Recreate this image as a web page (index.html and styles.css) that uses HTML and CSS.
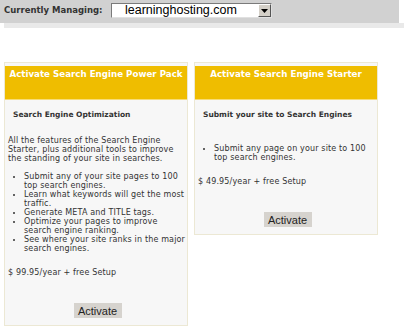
FILE: index.html
```html
<!DOCTYPE html>
<html lang="en">
<head>
  <meta charset="UTF-8" />
  <title>Search Engine Services</title>
  <link rel="stylesheet" href="styles.css">
</head>
<body>

  <div class="manage-bar">
    <span class="manage-label">Currently Managing:</span>
    <div class="domain-select">
      <span class="domain-name">learninghosting.com</span>
      <span class="drop-btn">
        <svg width="7" height="4" viewBox="0 0 7 4"><path d="M0 0h7L3.5 4z" fill="#000"/></svg>
      </span>
    </div>
  </div>
  <div class="manage-shadow"></div>

  <div class="plans">
    <div class="plan">
      <div class="plan-head">Activate Search Engine Power Pack</div>
      <div class="plan-body">
        <div class="plan-title">Search Engine Optimization</div>
        <p class="plan-desc">All the features of the Search Engine Starter, plus additional tools to improve the standing of your site in searches.</p>
        <ul class="plan-list">
          <li>Submit any of your site pages to 100 top search engines.</li>
          <li>Learn what keywords will get the most traffic.</li>
          <li>Generate META and TITLE tags.</li>
          <li>Optimize your pages to improve search engine ranking.</li>
          <li>See where your site ranks in the major search engines.</li>
        </ul>
        <p class="plan-price">$ 99.95/year + free Setup</p>
        <div class="plan-action"><button class="activate-btn">Activate</button></div>
      </div>
    </div>

    <div class="plan">
      <div class="plan-head">Activate Search Engine Starter</div>
      <div class="plan-body">
        <div class="plan-title">Submit your site to Search Engines</div>
        <ul class="plan-list starter">
          <li>Submit any page on your site to 100 top search engines.</li>
        </ul>
        <p class="plan-price">$ 49.95/year + free Setup</p>
        <div class="plan-action"><button class="activate-btn">Activate</button></div>
      </div>
    </div>
  </div>

</body>
</html>
```

FILE: styles.css
```css
* { box-sizing: border-box; }

body {
  margin: 0;
  background: #fff;
  font-family: 'DejaVu Sans', Verdana, sans-serif;
  color: #222;
}

.manage-bar {
  width: 399px;
  height: 23px;
  background: #d1d1d1;
  display: flex;
  align-items: flex-start;
  padding: 3px 0 0 4px;
}

.manage-label {
  font-size: 8.5px;
  font-weight: bold;
  color: #333;
  width: 107px;
  line-height: 15px;
}

.domain-select {
  width: 161px;
  height: 15px;
  background: #fff;
  border: 1px solid #7a7a7a;
  border-right-color: #e0e0e0;
  border-bottom-color: #e0e0e0;
  display: flex;
  align-items: center;
  justify-content: space-between;
}

.domain-name {
  font-family: 'Liberation Sans', Arial, sans-serif;
  font-size: 12.5px;
  color: #000;
  padding-left: 13px;
  line-height: 13px;
}

.drop-btn {
  width: 13px;
  height: 13px;
  background: #d4d0c8;
  border: 1px solid;
  border-color: #fff #555 #555 #fff;
  display: flex;
  align-items: center;
  justify-content: center;
}

.manage-shadow {
  margin-left: 4px;
  width: 400px;
  height: 5px;
  background: #e9e9e9;
}

.plans {
  display: flex;
  align-items: flex-start;
  gap: 6px;
  margin: 34px 0 0 4px;
}

.plan {
  width: 184px;
  background: #f7f7f7;
  border: 1px solid #ece8d4;
  padding-top: 3px;
}

.plan-head {
  height: 34px;
  background: #efbd00;
  border-bottom: 1px solid #f7dc78;
  color: #fff;
  font-size: 8.7px;
  font-weight: bold;
  text-align: center;
  padding-top: 3px;
}

.plan-body {
  padding: 10px 0 7px 3px;
  font-size: 8px;
  letter-spacing: 0.15px;
  line-height: 9px;
  color: #333;
}

.plan-title {
  font-weight: bold;
  padding-left: 5px;
  font-size: 7.5px;
  letter-spacing: 0;
}

.plan-desc {
  margin: 17px 0 0;
  padding-right: 3px;
}

.plan-list {
  margin: 9px 0 0;
  padding-left: 16px;
}

.plan-list.starter {
  margin-top: 25px;
}

.plan-price {
  margin: 15px 0 0;
}

.plan-action {
  text-align: center;
  margin-top: 26px;
}

.activate-btn {
  font-family: 'Liberation Sans', Arial, sans-serif;
  font-size: 11px;
  letter-spacing: 0;
  color: #222;
  background: #d6d3ce;
  border: none;
  width: 48px;
  height: 15px;
  padding: 0;
  display: block;
  margin: 0 auto;
}
```
